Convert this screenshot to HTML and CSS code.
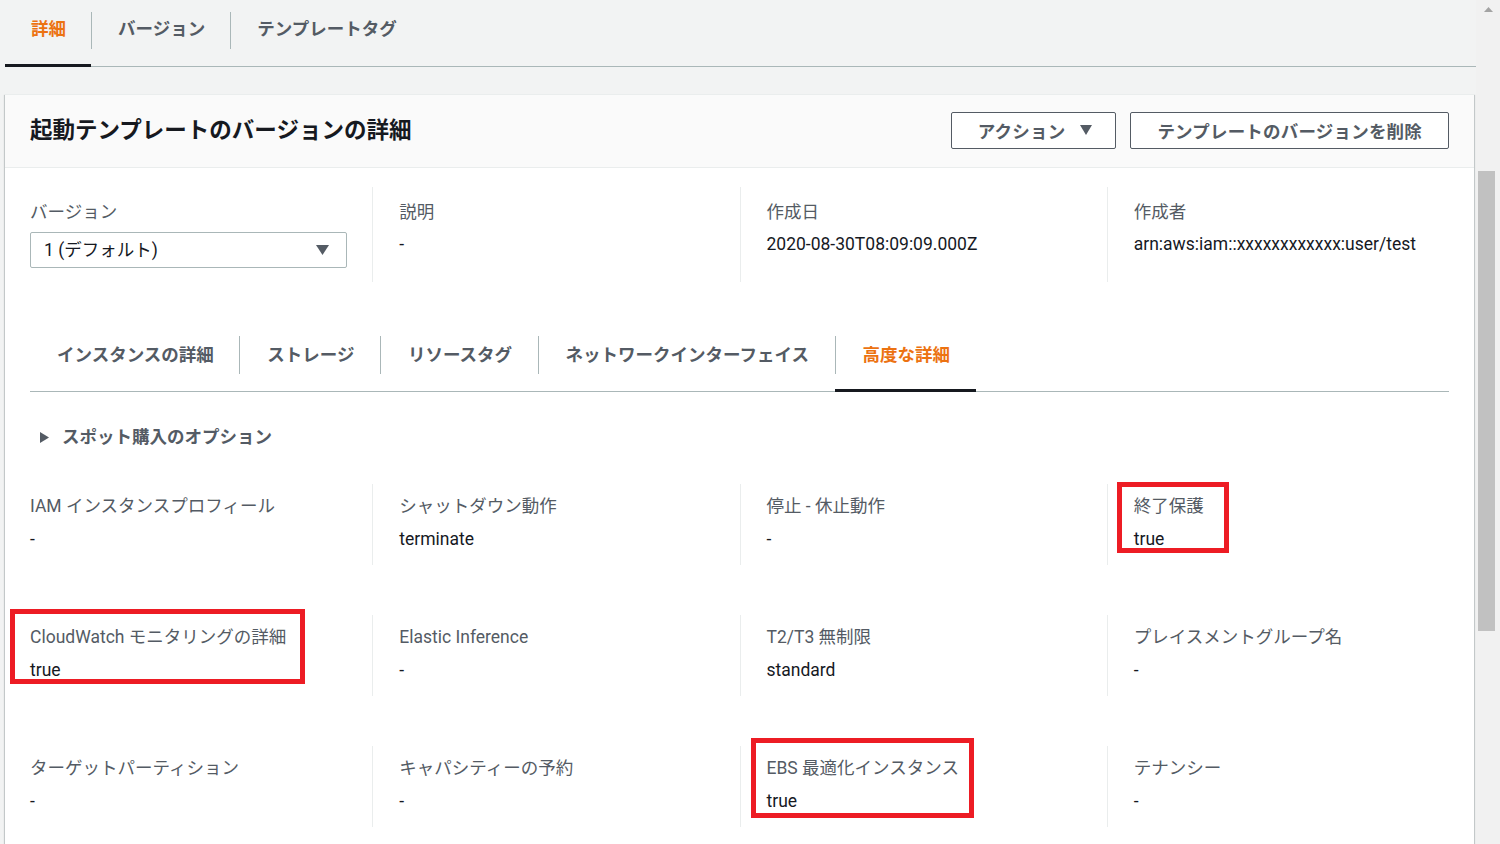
FILE: index.html
```html
<!DOCTYPE html>
<html lang="ja">
<head>
<meta charset="utf-8">
<title>起動テンプレートのバージョンの詳細</title>
<link rel="stylesheet" href="styles.css">
</head>
<body>
<div class="page">
  <div class="main">
    <nav class="tabs top-tabs">
      <div class="tab active"><span>詳細</span></div>
      <div class="tab"><span>バージョン</span></div>
      <div class="tab"><span>テンプレートタグ</span></div>
    </nav>

    <section class="card">
      <header class="card-head">
        <h2 class="card-title">起動テンプレートのバージョンの詳細</h2>
        <div class="actions">
          <button class="btn btn-menu">アクション<svg class="caret" viewBox="0 0 12 10" width="12" height="10"><polygon points="0,0 12,0 6,10" fill="#545b64"/></svg></button>
          <button class="btn">テンプレートのバージョンを削除</button>
        </div>
      </header>

      <div class="card-body">
        <div class="kv-grid first-row">
          <div class="cell">
            <div class="label">バージョン</div>
            <div class="select"><span>1 (デフォルト)</span><svg viewBox="0 0 13 10" width="13" height="10"><polygon points="0,0 13,0 6.5,10" fill="#545b64"/></svg></div>
          </div>
          <div class="cell">
            <div class="label">説明</div>
            <div class="value">-</div>
          </div>
          <div class="cell">
            <div class="label">作成日</div>
            <div class="value">2020-08-30T08:09:09.000Z</div>
          </div>
          <div class="cell">
            <div class="label">作成者</div>
            <div class="value">arn:aws:iam::xxxxxxxxxxxx:user/test</div>
          </div>
        </div>

        <nav class="tabs inner-tabs">
          <div class="tab"><span>インスタンスの詳細</span></div>
          <div class="tab"><span>ストレージ</span></div>
          <div class="tab"><span>リソースタグ</span></div>
          <div class="tab"><span>ネットワークインターフェイス</span></div>
          <div class="tab active"><span>高度な詳細</span></div>
        </nav>

        <div class="expander">
          <svg viewBox="0 0 9 11" width="9" height="11"><polygon points="0,0 9,5.5 0,11" fill="#545b64"/></svg>
          <span>スポット購入のオプション</span>
        </div>

        <div class="kv-grid details">
          <div class="cell"><div class="label">IAM インスタンスプロフィール</div><div class="value">-</div></div>
          <div class="cell"><div class="label">シャットダウン動作</div><div class="value">terminate</div></div>
          <div class="cell"><div class="label">停止 - 休止動作</div><div class="value">-</div></div>
          <div class="cell"><div class="label">終了保護</div><div class="value">true</div></div>

          <div class="cell"><div class="label">CloudWatch モニタリングの詳細</div><div class="value">true</div></div>
          <div class="cell"><div class="label">Elastic Inference</div><div class="value">-</div></div>
          <div class="cell"><div class="label">T2/T3 無制限</div><div class="value">standard</div></div>
          <div class="cell"><div class="label">プレイスメントグループ名</div><div class="value">-</div></div>

          <div class="cell"><div class="label">ターゲットパーティション</div><div class="value">-</div></div>
          <div class="cell"><div class="label">キャパシティーの予約</div><div class="value">-</div></div>
          <div class="cell"><div class="label">EBS 最適化インスタンス</div><div class="value">true</div></div>
          <div class="cell"><div class="label">テナンシー</div><div class="value">-</div></div>
        </div>
      </div>
    </section>
  </div>

  <div class="scrollbar">
    <svg class="sb-arrow" viewBox="0 0 9 5" width="9" height="5"><polygon points="0,5 4.5,0 9,5" fill="#a3a3a3"/></svg>
    <div class="sb-thumb"></div>
  </div>
</div>

<div class="mark mark-1"></div>
<div class="mark mark-2"></div>
<div class="mark mark-3"></div>
</body>
</html>
```

FILE: styles.css
```css
* { box-sizing: border-box; }

html, body {
  margin: 0;
  padding: 0;
  height: 100%;
  overflow: hidden;
}

body {
  background: #f2f3f3;
  font-family: "Roboto", "Noto Sans CJK JP", sans-serif;
  font-size: 17.5px;
  line-height: 22px;
  color: #16191f;
  position: relative;
}

.page {
  display: flex;
  width: 1500px;
  height: 844px;
}

.main {
  width: 1476px;
  flex: none;
  padding-left: 5px;
}

/* ---------- tabs ---------- */
.tabs {
  display: flex;
  align-items: flex-start;
  border-bottom: 1px solid #aab7b8;
}

.tab {
  padding: 12px 0 15px;
  border-bottom: 3px solid transparent;
  margin-bottom: -1px;
  font-weight: 700;
  color: #545b64;
}

.tab span {
  display: block;
  height: 38px;
  line-height: 38px;
  padding: 0 26px 0 27px;
  border-left: 1px solid transparent;
}

.tab + .tab span {
  border-left-color: #aab7b8;
}

.tab.active {
  border-bottom-color: #16191f;
  color: #ec7211;
}

.top-tabs .tab span {
  height: 37px;
  line-height: 35px;
  padding: 0 25px 0 26px;
}

.top-tabs .tab:first-child span {
  padding-left: 25px;
}

/* ---------- card ---------- */
.card {
  margin-top: 27px;
  margin-right: 2px;
  background: #ffffff;
  border-top: 1px solid #eaeded;
  box-shadow: 0 1px 1px 0 rgba(0, 28, 36, 0.3), 1px 1px 1px 0 rgba(0, 28, 36, 0.15), -1px 1px 1px 0 rgba(0, 28, 36, 0.15);
}

.card-head {
  display: flex;
  align-items: center;
  justify-content: space-between;
  height: 73px;
  padding: 0 25px;
  background: #fafafa;
  border-bottom: 1px solid #eaeded;
}

.card-title {
  margin: 0 0 3px;
  font-size: 22.5px;
  line-height: 28px;
  font-weight: 700;
  color: #16191f;
}

.actions {
  display: flex;
  gap: 14px;
  margin-bottom: 2px;
}

.btn {
  display: flex;
  align-items: center;
  height: 37px;
  padding: 0 26px 0 26px;
  background: #ffffff;
  border: 1px solid #545b64;
  border-radius: 2px;
  font-family: inherit;
  font-size: 17.5px;
  font-weight: 700;
  letter-spacing: 0.2px;
  color: #545b64;
}

.btn-menu {
  padding-right: 23px;
}

.btn .caret {
  margin-left: 15px;
}

.card-body {
  padding: 19px 0 40px;
}

/* ---------- key / value grid ---------- */
.kv-grid {
  display: grid;
  grid-template-columns: repeat(4, 1fr);
  row-gap: 50px;
}

.cell {
  padding: 11px 25px 14px 25px;
  min-height: 81px;
}

.cell:nth-child(4n+2),
.cell:nth-child(4n+3),
.cell:nth-child(4n+4) {
  border-left: 1px solid #eaeded;
  padding-left: 26px;
}

.first-row .cell {
  padding-top: 14px;
  padding-bottom: 14px;
  min-height: 95px;
}

.label {
  color: #545b64;
  white-space: nowrap;
}

.value {
  margin-top: 11px;
  color: #16191f;
  white-space: nowrap;
}

.first-row .value {
  margin-top: 10px;
}

.select {
  margin-top: 9px;
  height: 36px;
  display: flex;
  align-items: center;
  justify-content: space-between;
  padding: 0 17px 0 13px;
  border: 1px solid #aab7b8;
  border-radius: 2px;
  color: #16191f;
}

/* ---------- inner tabs / expander ---------- */
.inner-tabs {
  margin: 42px 25px 0;
}

.inner-tabs .tab:first-child span {
  padding-left: 26px;
}

.inner-tabs .tab span {
  padding-right: 25.5px;
}

.expander {
  display: flex;
  align-items: center;
  gap: 13px;
  margin: 34px 25px 36px;
  padding-left: 10px;
  font-weight: 700;
  color: #545b64;
}

/* ---------- fake scrollbar ---------- */
.scrollbar {
  width: 24px;
  flex: none;
  background: #f1f1f1;
  position: relative;
}

.sb-arrow {
  display: block;
  margin: 7px 0 0 8px;
}

.sb-thumb {
  margin: 159px 0 0 2px;
  width: 17px;
  height: 460px;
  background: #c1c1c1;
}

/* ---------- annotation marks ---------- */
.mark {
  position: absolute;
  border: 5px solid #ed1c24;
}

.mark-1 { left: 1117px; top: 482px; width: 112px; height: 71px; }
.mark-2 { left: 10px; top: 609px; width: 295px; height: 75px; }
.mark-3 { left: 751px; top: 738px; width: 223px; height: 80px; }
```
